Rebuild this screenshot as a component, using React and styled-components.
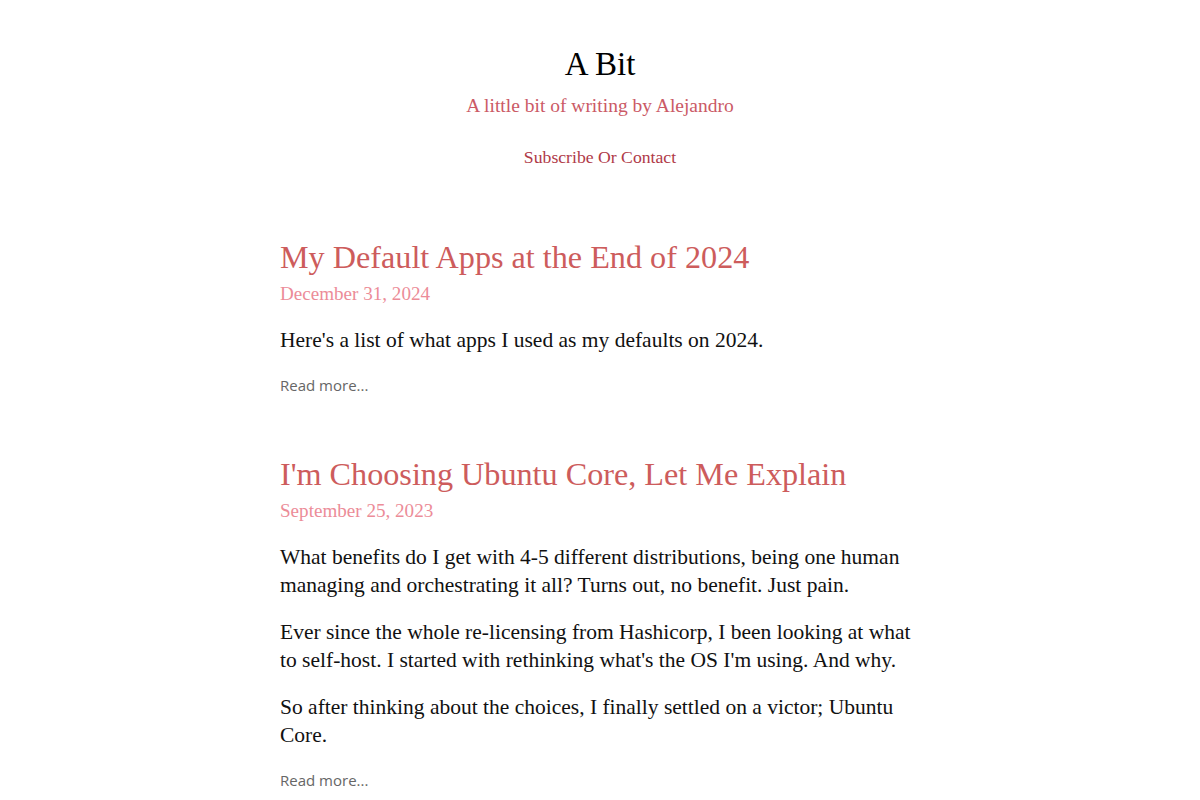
import React from "react";
import styled, { createGlobalStyle } from "styled-components";

const Global = createGlobalStyle`
  html, body { margin: 0; padding: 0; background: #fff; }
  body { font-family: "Liberation Serif", "DejaVu Serif", serif; color: #111; }
`;

const Page = styled.div`
  width: 640px;
  margin: 0 auto;
  padding-top: 42px;
`;

const Header = styled.header`
  display: flex;
  flex-direction: column;
  align-items: center;
  text-align: center;
`;

const SiteTitle = styled.h1`
  margin: 0;
  font-size: 33px;
  font-weight: 400;
  line-height: 44px;
  color: #000;
`;

const Tagline = styled.p`
  margin: 7px 0 0;
  font-size: 19.5px;
  line-height: 26px;
  color: #cb5a66;
`;

const NavLink = styled.a`
  margin-top: 26px;
  font-size: 17.7px;
  line-height: 24px;
  color: #b03a48;
  text-decoration: none;
`;

const PostList = styled.main`
  display: flex;
  flex-direction: column;
  gap: 59px;
  margin-top: 68px;
`;

const Post = styled.article`
  display: flex;
  flex-direction: column;
`;

const PostTitle = styled.a`
  font-size: 32.2px;
  line-height: 40px;
  color: #cd5c5c;
  text-decoration: none;
`;

const PostDate = styled.time`
  margin-top: 4px;
  font-size: 19.1px;
  line-height: 26px;
  color: #ec8c98;
`;

const Excerpt = styled.div`
  margin-top: 19px;
  display: flex;
  flex-direction: column;
  gap: 19px;
`;

const Para = styled.p`
  margin: 0;
  font-size: 21.5px;
  line-height: 28px;
  color: #111;
`;

const ReadMore = styled.a`
  margin-top: 21px;
  font-family: "Open Sans", "Liberation Sans", sans-serif;
  font-size: 15px;
  line-height: 20px;
  color: #666;
  text-decoration: none;
`;

const posts = [
  {
    title: "My Default Apps at the End of 2024",
    date: "December 31, 2024",
    body: ["Here's a list of what apps I used as my defaults on 2024."],
  },
  {
    title: "I'm Choosing Ubuntu Core, Let Me Explain",
    date: "September 25, 2023",
    body: [
      "What benefits do I get with 4-5 different distributions, being one human managing and orchestrating it all? Turns out, no benefit. Just pain.",
      "Ever since the whole re-licensing from Hashicorp, I been looking at what to self-host. I started with rethinking what's the OS I'm using. And why.",
      "So after thinking about the choices, I finally settled on a victor; Ubuntu Core.",
    ],
  },
];

export default function App() {
  return (
    <>
      <Global />
      <Page>
        <Header>
          <SiteTitle>A Bit</SiteTitle>
          <Tagline>A little bit of writing by Alejandro</Tagline>
          <NavLink href="#">Subscribe Or Contact</NavLink>
        </Header>
        <PostList>
          {posts.map((p) => (
            <Post key={p.title}>
              <PostTitle href="#">{p.title}</PostTitle>
              <PostDate>{p.date}</PostDate>
              <Excerpt>
                {p.body.map((t, i) => (
                  <Para key={i}>{t}</Para>
                ))}
              </Excerpt>
              <ReadMore href="#">Read more...</ReadMore>
            </Post>
          ))}
        </PostList>
      </Page>
    </>
  );
}
